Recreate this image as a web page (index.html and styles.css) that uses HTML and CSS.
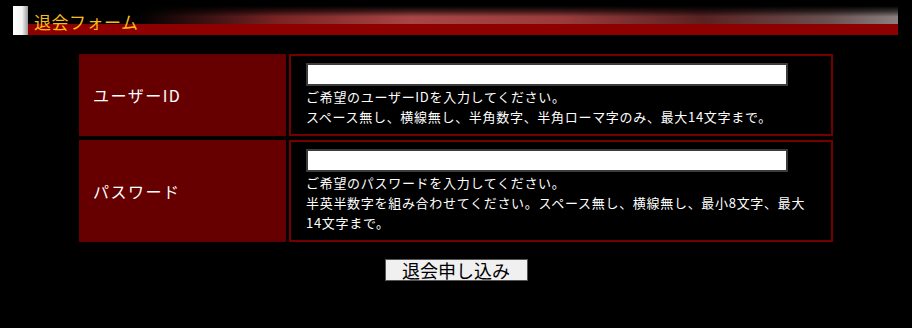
FILE: index.html
```html
<!DOCTYPE html>
<html lang="ja">
<head>
    <meta charset="UTF-8">
    <title>退会フォーム</title>
    <link rel="stylesheet" href="styles.css">
</head>
<body>
    <div class="page-title">
        <span class="title-mark"></span>
        <h2>退会フォーム</h2>
    </div>

    <form class="leave-form">
        <div class="form-grid">
            <div class="form-label">ユーザーID</div>
            <div class="form-field">
                <input type="text" class="text-input" name="user_id">
                <p class="note">ご希望のユーザーIDを入力してください。<br>スペース無し、横線無し、半角数字、半角ローマ字のみ、最大14文字まで。</p>
            </div>

            <div class="form-label">パスワード</div>
            <div class="form-field">
                <input type="password" class="text-input" name="password">
                <p class="note">ご希望のパスワードを入力してください。<br>半英半数字を組み合わせてください。スペース無し、横線無し、最小8文字、最大<br>14文字まで。</p>
            </div>
        </div>

        <div class="form-submit">
            <button type="submit" class="submit-btn">退会申し込み</button>
        </div>
    </form>
</body>
</html>
```

FILE: styles.css
```css
* {
    box-sizing: border-box;
    margin: 0;
    padding: 0;
}

body {
    background: #000;
    color: #fff;
    font-family: "Noto Sans CJK JP", "Liberation Sans", sans-serif;
    padding-top: 6px;
    width: 912px;
}

/* 見出しバー */
.page-title {
    display: flex;
    height: 29px;
    margin: 0 14px 0 13px;
    background:
        linear-gradient(to bottom, #000 0%, rgba(0,0,0,0.6) 30%, rgba(0,0,0,0) 60%, rgba(0,0,0,0) 100%),
        linear-gradient(to right, #000 0%, #000 14%, #7a2424 30%, #a84646 45%, #9a3c3c 62%, #5a2222 78%, #6a5050 92%, #8a8080 100%);
    background-size: 100% 18px, 100% 18px;
    background-repeat: no-repeat;
    background-color: #8e0000;
}

.title-mark {
    width: 15px;
    background: linear-gradient(to right, #fff 0%, #f4f4f4 60%, #9a9a9a 100%);
}

.page-title h2 {
    font-size: 17px;
    font-weight: normal;
    color: #fcbc16;
    line-height: 29px;
    padding-left: 6px;
    position: relative;
    top: 1px;
    letter-spacing: 0.5px;
}

/* フォーム */
.leave-form {
    margin-top: 19px;
}

.form-grid {
    display: grid;
    grid-template-columns: 207px 544px;
    column-gap: 3px;
    row-gap: 4px;
    width: 754px;
    margin: 0 auto;
}

.form-label {
    background: #660000;
    display: flex;
    align-items: center;
    padding-left: 14px;
    font-size: 16px;
    letter-spacing: 1.5px;
}

.form-field {
    border: 2px solid #740000;
    padding: 7px 15px 7px 15px;
}

.text-input {
    display: block;
    width: 482px;
    height: 23px;
    border: 2px solid #3c3c3c;
    background: #fff;
}

.note {
    font-size: 13px;
    line-height: 20px;
    letter-spacing: 0.7px;
    margin-top: 1px;
}

.form-submit {
    text-align: center;
    margin-top: 17px;
}

.submit-btn {
    width: 143px;
    height: 22px;
    background: #f0f0f0;
    border: 1px solid #555;
    outline: 1px solid #000;
    font-family: "Noto Sans CJK JP", sans-serif;
    font-size: 18px;
    line-height: 18px;
    color: #000;
}
```
